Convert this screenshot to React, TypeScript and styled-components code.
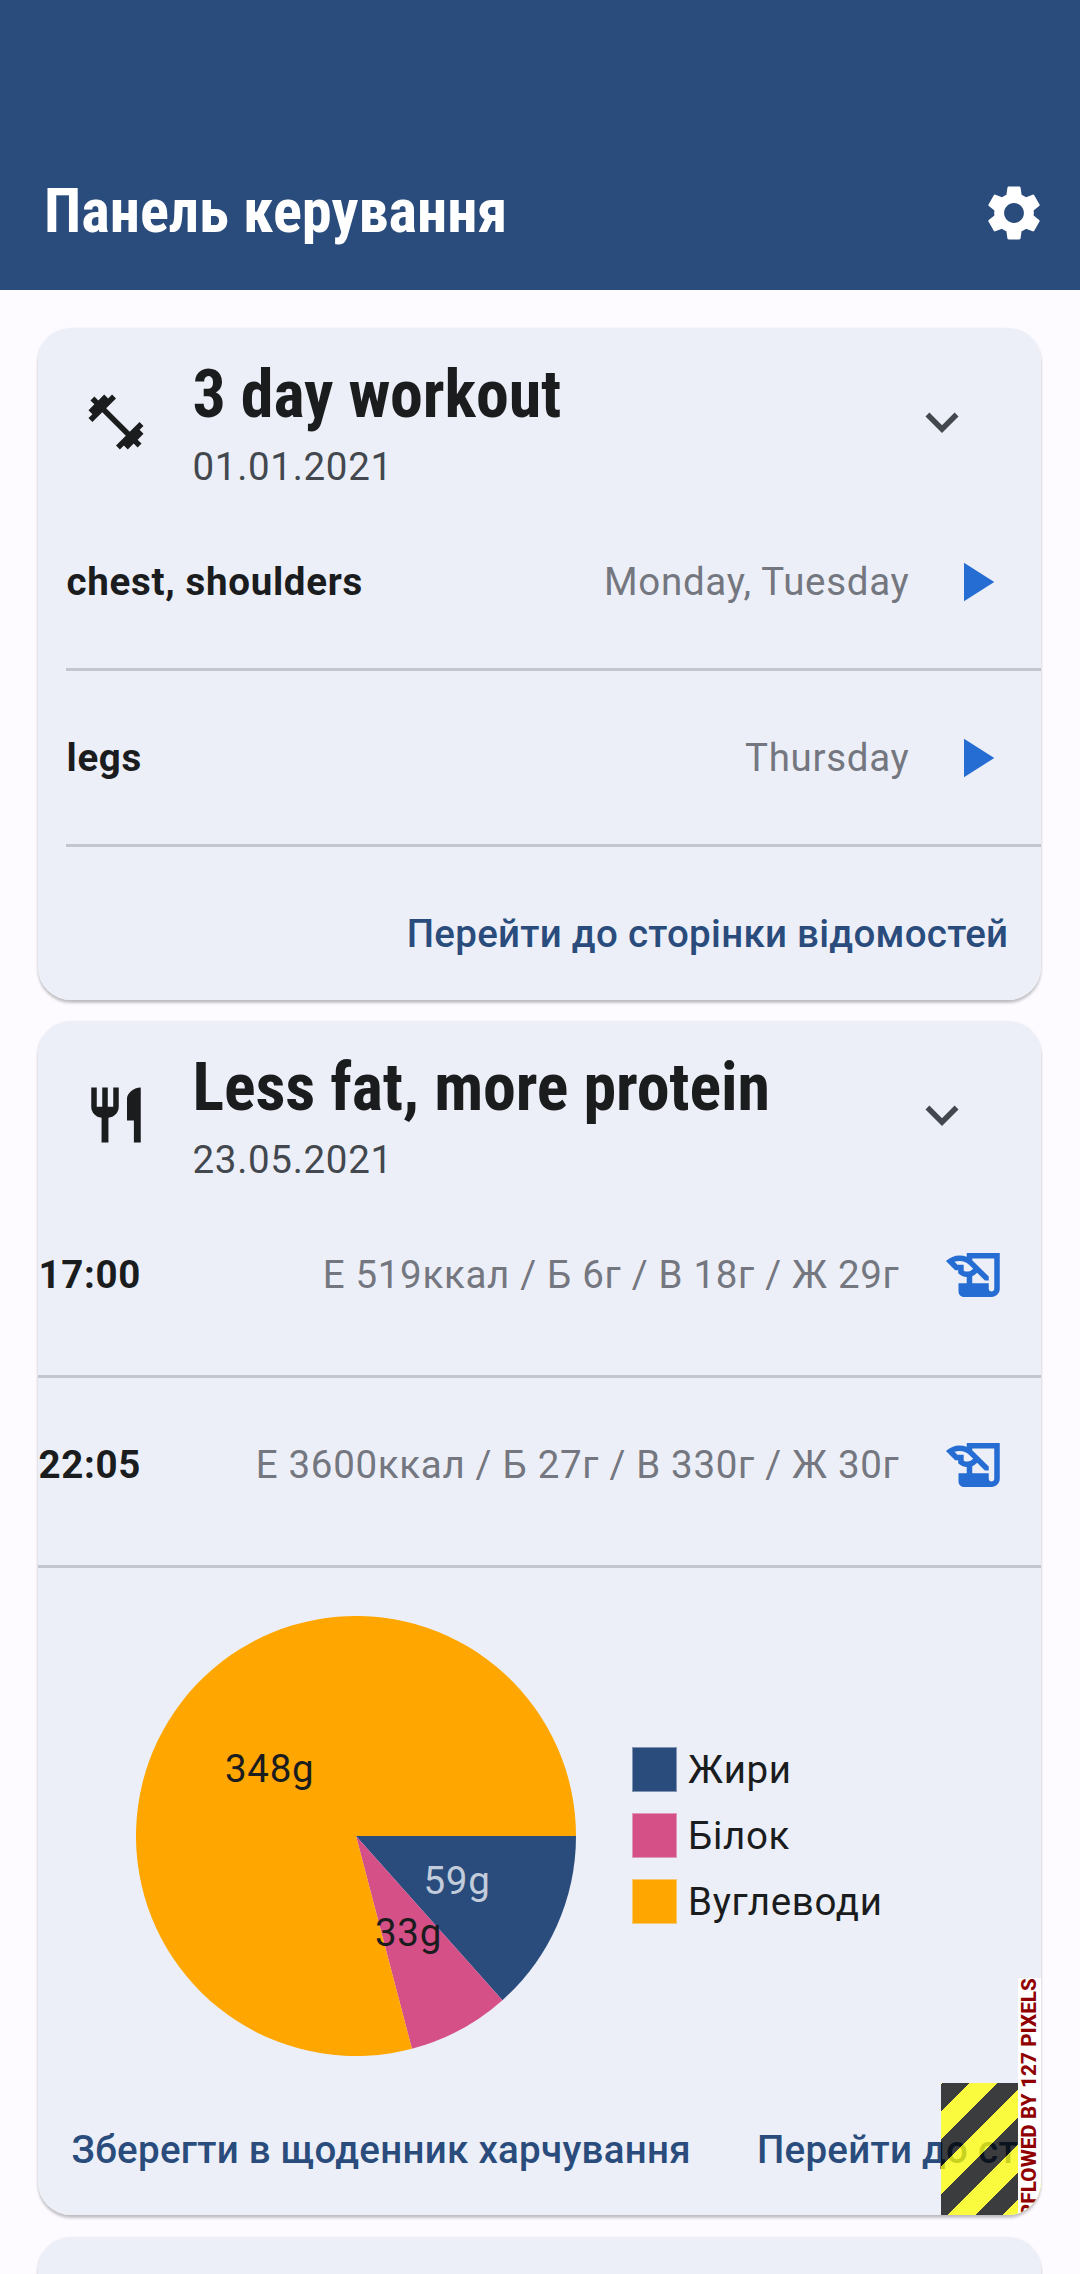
import React from "react";
import styled, { createGlobalStyle } from "styled-components";
import {
  MdExpandMore,
  MdFitnessCenter,
  MdHistoryEdu,
  MdPlayArrow,
  MdRestaurant,
  MdSettings,
} from "react-icons/md";

const color = {
  primary: "#2a4c7d",
  accent: "#266dd3",
  page: "#fdfbff",
  card: "#eceff7",
  ink: "#1a1c1e",
  variant: "#43474e",
  muted: "#74777f",
  divider: "#c3c6cf",
  pink: "#d45087",
  orange: "#ffa600",
};

const GlobalStyle = createGlobalStyle`
  * { box-sizing: border-box; }
  html, body { margin: 0; padding: 0; }
  body {
    background: ${color.page};
    font-family: Roboto, "Noto Sans", sans-serif;
    color: ${color.ink};
  }
`;

const Screen = styled.div`
  width: 1080px;
  height: 2274px;
  overflow: hidden;
  display: flex;
  flex-direction: column;
  background: ${color.page};
`;

const AppBar = styled.header`
  flex: none;
  display: flex;
  align-items: center;
  justify-content: space-between;
  height: 290px;
  padding: 136px 0 0 44px;
  background: ${color.primary};
  color: #fff;
`;

const AppTitle = styled.h1`
  margin: 0;
  padding-bottom: 2px;
  font-family: "Roboto Condensed", Roboto, sans-serif;
  font-stretch: 75%;
  font-size: 60.5px;
  line-height: 72px;
  font-weight: 700;
  white-space: nowrap;
`;

const IconButton = styled.button`
  flex: none;
  display: flex;
  align-items: center;
  justify-content: center;
  width: 132px;
  height: 132px;
  padding: 0;
  border: 0;
  background: none;
  color: inherit;
  svg { width: 66px; height: 66px; }
`;

const RowButton = styled(IconButton)`
  color: ${color.accent};
`;

const Content = styled.main`
  flex: none;
  display: flex;
  flex-direction: column;
  gap: 21.5px;
  padding: 38px 38.6px 0 38px;
`;

const Card = styled.section`
  position: relative;
  overflow: hidden;
  display: flex;
  flex-direction: column;
  border-radius: 33px;
  background: ${color.card};
`;

const CardShadow = styled.div`
  border-radius: 33px;
  box-shadow: 0 2.5px 3px rgba(0, 0, 0, 0.22), 0 1px 3px rgba(0, 0, 0, 0.06);
`;

const EmptyCard = styled(Card)`
  height: 200px;
`;

const CardHeader = styled.header`
  display: flex;
  align-items: center;
  height: 187.5px;
  padding: 0 66px 0 44.5px;
  svg { flex: none; width: 66px; height: 66px; }
`;

const Heading = styled.div`
  flex: 1;
  margin-left: 44px;
  padding-top: 1px;
`;

const CardTitle = styled.h2`
  margin: 0;
  font-family: "Roboto Condensed", Roboto, sans-serif;
  font-stretch: 75%;
  font-size: 66px;
  line-height: 88px;
  font-weight: 700;
  letter-spacing: -0.1px;
  white-space: nowrap;
`;

const CardDate = styled.div`
  font-size: 38.5px;
  line-height: 55px;
  letter-spacing: 0.69px;
  color: ${color.variant};
`;

const Chevron = styled(MdExpandMore)`
  color: ${color.variant};
`;

const List = styled.div<{ $inset: number }>`
  display: flex;
  flex-direction: column;
  padding-left: ${(p) => p.$inset}px;
`;

const Row = styled.div<{ $bottom?: number; $gap?: number }>`
  display: flex;
  align-items: center;
  height: ${(p) => 132 + (p.$bottom ?? 0)}px;
  padding: 0 0 ${(p) => p.$bottom ?? 0}px 0.5px;
  ${RowButton} { margin-left: ${(p) => p.$gap ?? 0}px; }
`;

const RowLabel = styled.span`
  font-size: 38.5px;
  font-weight: 700;
  letter-spacing: 0.69px;
  white-space: nowrap;
`;

const RowValue = styled.span`
  flex: 1;
  text-align: right;
  font-size: 38.5px;
  letter-spacing: 0.69px;
  color: ${color.muted};
  white-space: nowrap;
`;

const Divider = styled.hr`
  width: 100%;
  height: 3px;
  margin: 20.5px 0;
  border: 0;
  background: ${color.divider};
`;

const Actions = styled.footer<{ $align: string }>`
  display: flex;
  align-items: center;
  justify-content: ${(p) => p.$align};
  height: 132px;
  padding-left: 0.5px;
`;

const TextButton = styled.button`
  flex: none;
  padding: 0 33px;
  border: 0;
  background: none;
  font: 500 38.5px Roboto, "Noto Sans", sans-serif;
  letter-spacing: 0.28px;
  color: ${color.primary};
  white-space: nowrap;
`;

const ChartPanel = styled.div`
  display: flex;
  align-items: center;
  height: 494.5px;
  padding-left: 98px;
`;

const Pie = styled.svg`
  flex: none;
  width: 440px;
  height: 440px;
  font-size: 38.5px;
  letter-spacing: 0.69px;
`;

const Legend = styled.ul`
  display: flex;
  flex-direction: column;
  gap: 21px;
  margin: 0 0 0 56px;
  padding: 0;
  list-style: none;
`;

const LegendItem = styled.li<{ $color: string }>`
  display: flex;
  align-items: center;
  gap: 11px;
  height: 45px;
  font-size: 38.5px;
  letter-spacing: 0.69px;
  &::before {
    content: "";
    width: 45px;
    height: 45px;
    background: ${(p) => p.$color};
    box-shadow: inset 0 0 0 1px rgba(236, 239, 247, 0.45);
  }
`;

const OverflowStripes = styled.div`
  position: absolute;
  right: 0;
  bottom: 0;
  width: 100.4px;
  height: 132px;
  background: repeating-linear-gradient(
    135deg,
    rgba(255, 255, 0, 0.75) 0 1px,
    rgba(0, 0, 0, 0.75) 1px 20.4px,
    rgba(255, 255, 0, 0.75) 20.4px 38.9px
  );
`;

const OverflowLabel = styled.div`
  position: absolute;
  right: 0.4px;
  top: 957px;
  writing-mode: vertical-rl;
  transform: rotate(180deg);
  background: #fff;
  color: #900000;
  font-size: 20.6px;
  line-height: 23px;
  font-weight: 800;
  letter-spacing: 0.1px;
  white-space: nowrap;
`;

const slices = [
  { grams: 59, fill: color.primary, text: "#c3ccdb", x: 67.5, y: 58 },
  { grams: 33, fill: color.pink, text: color.ink, x: 19, y: 110 },
  { grams: 348, fill: color.orange, text: color.ink, x: -131, y: -54 },
];

function MacroPie() {
  const total = slices.reduce((sum, s) => sum + s.grams, 0);
  const point = (g: number) => {
    const a = (g / total) * Math.PI * 2;
    return `${(220 * Math.cos(a)).toFixed(3)} ${(220 * Math.sin(a)).toFixed(3)}`;
  };
  let start = 0;
  const paths = slices.map((s) => {
    const end = start + s.grams;
    const d = `M0 0L${point(start)}A220 220 0 ${s.grams * 2 > total ? 1 : 0} 1 ${point(end)}Z`;
    start = end;
    return <path key={s.grams} d={d} fill={s.fill} />;
  });
  return (
    <Pie viewBox="-220 -220 440 440">
      {paths}
      {slices.map((s) => (
        <text key={s.grams} x={s.x} y={s.y} fill={s.text}>
          {s.grams}g
        </text>
      ))}
    </Pie>
  );
}

const workouts = [
  { name: "chest, shoulders", days: "Monday, Tuesday" },
  { name: "legs", days: "Thursday" },
];

const meals = [
  { time: "17:00", values: "Е 519ккал / Б 6г / В 18г / Ж 29г" },
  { time: "22:05", values: "Е 3600ккал / Б 27г / В 330г / Ж 30г" },
];

export default function App() {
  return (
    <Screen>
      <GlobalStyle />
      <AppBar>
        <AppTitle>Панель керування</AppTitle>
        <IconButton>
          <MdSettings />
        </IconButton>
      </AppBar>
      <Content>
        <CardShadow>
          <Card>
            <CardHeader>
              <MdFitnessCenter />
              <Heading>
                <CardTitle>3 day workout</CardTitle>
                <CardDate>01.01.2021</CardDate>
              </Heading>
              <Chevron />
            </CardHeader>
            <List $inset={28}>
              {workouts.map((w) => (
                <React.Fragment key={w.name}>
                  <Row>
                    <RowLabel>{w.name}</RowLabel>
                    <RowValue>{w.days}</RowValue>
                    <RowButton>
                      <MdPlayArrow />
                    </RowButton>
                  </Row>
                  <Divider />
                </React.Fragment>
              ))}
            </List>
            <Actions $align="flex-end">
              <TextButton>Перейти до сторінки відомостей</TextButton>
            </Actions>
          </Card>
        </CardShadow>
        <CardShadow>
          <Card>
            <CardHeader>
              <MdRestaurant />
              <Heading>
                <CardTitle>Less fat, more protein</CardTitle>
                <CardDate>23.05.2021</CardDate>
              </Heading>
              <Chevron />
            </CardHeader>
            <List $inset={0}>
              {meals.map((m) => (
                <React.Fragment key={m.time}>
                  <Row $bottom={14} $gap={10}>
                    <RowLabel>{m.time}</RowLabel>
                    <RowValue>{m.values}</RowValue>
                    <RowButton>
                      <MdHistoryEdu />
                    </RowButton>
                  </Row>
                  <Divider />
                </React.Fragment>
              ))}
            </List>
            <ChartPanel>
              <MacroPie />
              <Legend>
                <LegendItem $color={color.primary}>Жири</LegendItem>
                <LegendItem $color={color.pink}>Білок</LegendItem>
                <LegendItem $color={color.orange}>Вуглеводи</LegendItem>
              </Legend>
            </ChartPanel>
            <Actions $align="flex-start">
              <TextButton>Зберегти в щоденник харчування</TextButton>
              <TextButton>Перейти до сторінки відомостей</TextButton>
            </Actions>
            <OverflowStripes />
            <OverflowLabel>RIGHT OVERFLOWED BY 127 PIXELS</OverflowLabel>
          </Card>
        </CardShadow>
        <CardShadow>
          <EmptyCard />
        </CardShadow>
      </Content>
    </Screen>
  );
}
